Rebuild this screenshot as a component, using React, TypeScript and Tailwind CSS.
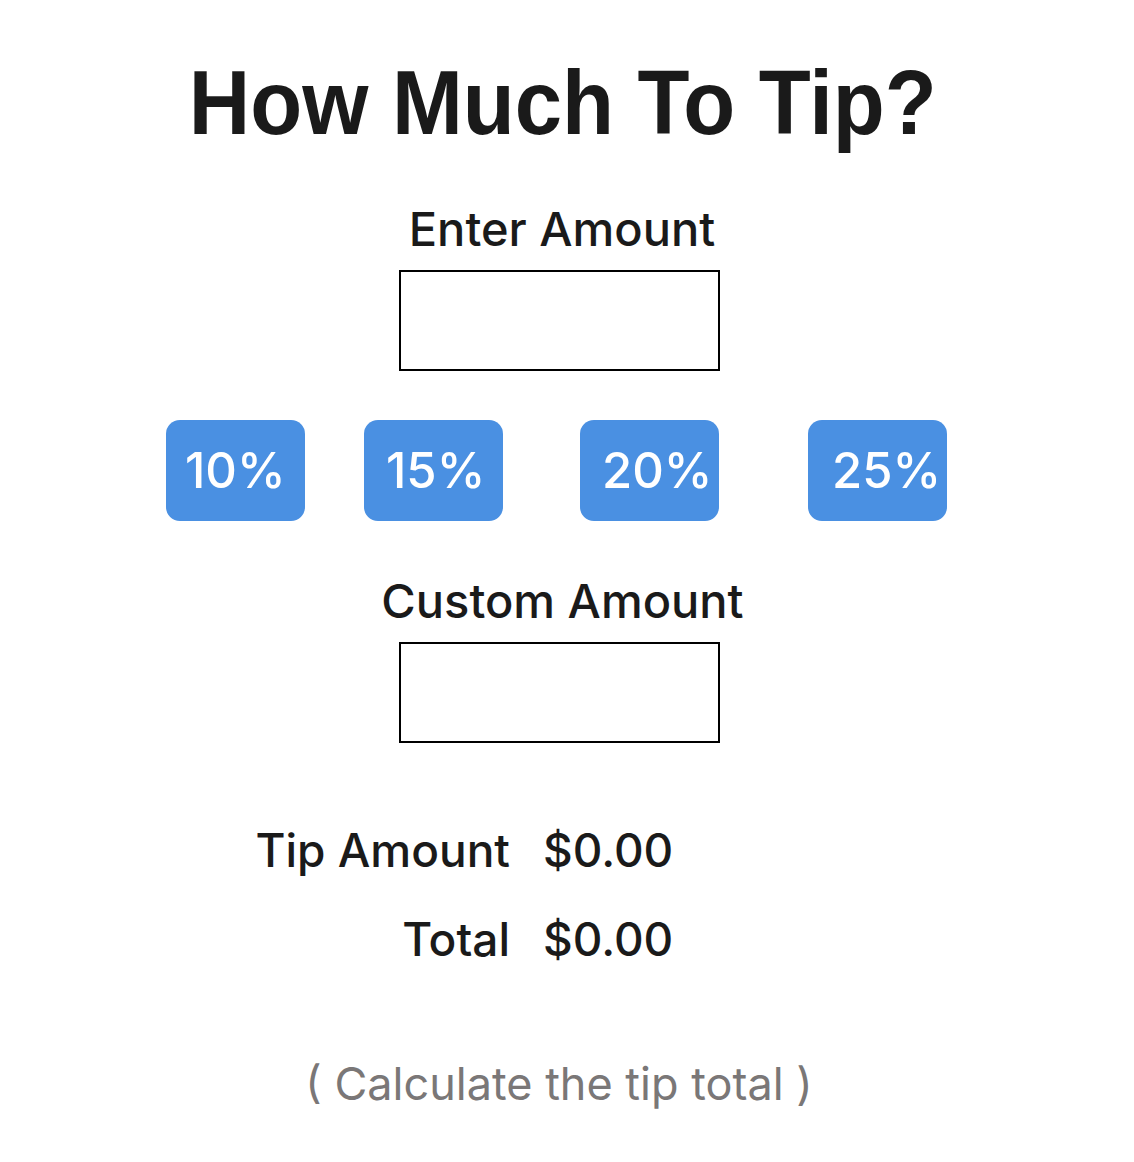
import { useState } from 'react';

const TipCalculator = () => {
  const [amount, setAmount] = useState('');
  const [custom, setCustom] = useState('');
  const [percent, setPercent] = useState(0);

  const bill = parseFloat(amount) || 0;
  const tip = custom ? parseFloat(custom) || 0 : (bill * percent) / 100;
  const total = bill + tip;

  const tips = [
    { label: '10%', value: 10, className: 'ml-[166px] pl-[19px]' },
    { label: '15%', value: 15, className: 'ml-[59px] pl-[22px]' },
    { label: '20%', value: 20, className: 'ml-[77px] pl-[22px]' },
    { label: '25%', value: 25, className: 'ml-[89px] pl-[24px]' },
  ];

  return (
    <div className="w-[1118px] bg-white text-[#1a1a1a] font-['Inter','Liberation_Sans',sans-serif] flex flex-col items-center">
      <h1 className="mt-[58px] ml-[7px] text-[90px] leading-[90px] font-bold scale-x-[0.945] font-['Liberation_Sans',Arial,sans-serif]">
        How Much To Tip?
      </h1>

      <label className="mt-[58px] ml-[6px] text-[47px] leading-[46px] font-medium">Enter Amount</label>
      <input
        value={amount}
        onChange={(e) => setAmount(e.target.value)}
        className="mt-[18px] w-[321px] h-[101px] border-2 border-black outline-none px-3 text-[40px]"
      />

      {/* Tip buttons */}
      <div className="mt-[49px] w-full flex">
        {tips.map((t) => (
          <button
            key={t.label}
            onClick={() => {
              setPercent(t.value);
              setCustom('');
            }}
            className={`${t.className} w-[139px] h-[101px] rounded-[14px] bg-[#4a90e2] text-white text-[49px] font-medium text-left`}
          >
            {t.label}
          </button>
        ))}
      </div>

      <label className="mt-[57px] ml-[7px] text-[47px] leading-[46px] font-medium">Custom Amount</label>
      <input
        value={custom}
        onChange={(e) => setCustom(e.target.value)}
        className="mt-[18px] w-[321px] h-[101px] border-2 border-black outline-none px-3 text-[40px]"
      />

      {/* Results */}
      <div className="mt-[84px] self-start ml-[240px] grid grid-cols-[270px_auto] gap-x-[33px] gap-y-[43px] text-[46px] leading-[46px] font-medium">
        <span className="text-right">Tip Amount</span>
        <span>${tip.toFixed(2)}</span>
        <span className="text-right">Total</span>
        <span>${total.toFixed(2)}</span>
      </div>

      <p className="mt-[100px] mb-[40px] text-[45px] leading-[44px] text-[#7a7777]">( Calculate the tip total )</p>
    </div>
  );
};

export default TipCalculator;
